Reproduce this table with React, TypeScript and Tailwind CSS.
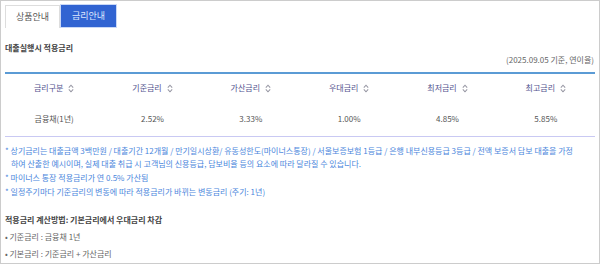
import React from 'react';

const font = { fontFamily: '"Noto Sans CJK KR", "Noto Sans", sans-serif' };

const SortIcon: React.FC = () => (
	<svg width="6" height="9" viewBox="0 0 6 9" className="ml-[5px] shrink-0">
		<path d="M0.8 3.6 L3 1.2 L5.2 3.6" fill="none" stroke="#9a9aa6" strokeWidth="1.1" />
		<path d="M0.8 5.4 L3 7.8 L5.2 5.4" fill="none" stroke="#9a9aa6" strokeWidth="1.1" />
	</svg>
);

const columns = ['금리구분', '기준금리', '가산금리', '우대금리', '최저금리', '최고금리'];
const values = ['금융채(1년)', '2.52%', '3.33%', '1.00%', '4.85%', '5.85%'];

export default function App() {
	return (
		<div style={font} className="w-[600px] h-[264px] overflow-hidden border border-[#cccccc] bg-white px-[4px]">
			{/* tabs */}
			<div className="flex items-end mt-[3px] h-[24px]">
				<div className="w-[55px] h-[23px] border border-b-0 border-[#dddddd] flex items-center justify-center text-[9px] text-[#555555]">
					상품안내
				</div>
				<div className="w-[57px] h-[24px] bg-[#3164d2] border border-[#c9d8f7] flex items-center justify-center text-[9px] text-[#dfe7ff]">
					금리안내
				</div>
			</div>

			<div className="mt-[14px] h-[12px] leading-[12px] text-[8px] font-bold text-[#444444]">대출실행시 적용금리</div>
			<div className="h-[12px] leading-[12px] text-[8px] text-[#666666] text-right pr-[1px]">(2025.09.05 기준, 연이율)</div>

			{/* table */}
			<div className="mt-[6px] border-t-2 border-[#5b9bd5] border-b border-b-[#c9c9f3]">
				<div className="grid grid-cols-6 h-[28px] items-center">
					{columns.map((c) => (
						<div key={c} className="flex items-center justify-center text-[8px] text-[#52528e]">
							{c}
							<SortIcon />
						</div>
					))}
				</div>
				<div className="grid grid-cols-6 h-[34px] items-center">
					{values.map((v) => (
						<div key={v} className="text-center text-[8px] text-[#555555]">
							{v}
						</div>
					))}
				</div>
			</div>

			{/* notes */}
			<div className="mt-[7px] text-[8px] leading-[13px] text-[#4a86dc]">
				<p className="mb-[1px]">
					* 상기금리는 대출금액 3백만원 / 대출기간 12개월 / 만기일시상환/ 유동성한도(마이너스통장) / 서울보증보험 1등급 / 은행 내부신용등급 3등급 / 전액 보증서 담보 대출을 가정
					<br />
					<span className="pl-[6px]">하여 산출한 예시이며, 실제 대출 취급 시 고객님의 신용등급, 담보비율 등의 요소에 따라 달라질 수 있습니다.</span>
				</p>
				<p className="mb-[1px]">* 마이너스 통장 적용금리가 연 0.5% 가산됨</p>
				<p>* 일정주기마다 기준금리의 변동에 따라 적용금리가 바뀌는 변동금리 (주기: 1년)</p>
			</div>

			<div className="mt-[15px] text-[8px] leading-[13px] font-bold text-[#444444]">적용금리 계산방법: 기본금리에서 우대금리 차감</div>
			<div className="mt-[4px] text-[8px] leading-[13px] text-[#666666]">• 기준금리 : 금융채 1년</div>
			<div className="mt-[4px] text-[8px] leading-[13px] text-[#666666]">• 기본금리 : 기준금리 + 가산금리</div>
		</div>
	);
}
